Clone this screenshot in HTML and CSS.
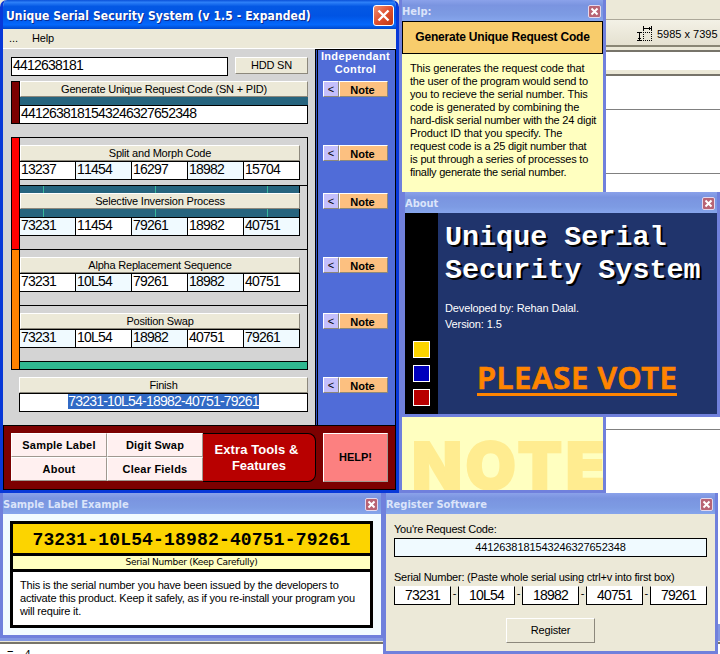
FILE: index.html
```html
<!DOCTYPE html>
<html lang="en">
<head>
<meta charset="utf-8">
<title>Unique Serial Security System</title>
<link rel="stylesheet" href="styles.css">
</head>
<body>
<div class="desktop">
  <div class="backdrop">
    <div class="bd-menu"></div>
    <div class="bd-status">
      <svg width="16" height="16" viewBox="0 0 16 16" fill="none" stroke="#000" shape-rendering="crispEdges">
        <path d="M0 6.500h5M0 14.500h5M2.500 7v7M1 12.500h3M6.500 0v5M14.500 0v5M7 2.500h7M12.500 1v3"/>
        <path d="M6 6.500h9M6 14.500h9M6.500 6v9M14.500 6v9" stroke-dasharray="1 1"/>
      </svg>
      <span class="t-size">5985 x 7395</span>
    </div>
    <div class="bd-tabs"></div>
    <div class="bd-ruler"></div>
    <div class="bd-row r1"></div>
    <div class="bd-row r2"></div>
    <div class="bd-row r3"></div>
    <div class="bd-rest"></div>
    <div class="bd-edge"></div>
    <div class="bd-foot"><span class="eq">=</span><span>4</span></div>
  </div>

  <section class="win help">
    <header class="bar"><span class="cap">Help:</span><i class="x"><svg viewBox="0 0 11 11"><path d="M2.500 2.500l6 6M8.500 2.500l-6 6"/></svg></i></header>
    <div class="help-body">
      <h2><span>Generate Unique Request Code</span></h2>
      <p><span class="k2">This generates the request code that</span><span class="k3">the user of the program would send to</span><span class="k2">you to recieve the serial number. This</span><span class="k2">code is generated by combining the</span><span class="k3">hard-disk serial number with the 24 digit</span><span class="k1">Product ID that you specify. The</span><span class="k3">request code is a 25 digit number that</span><span class="k3">is put through a series of processes to</span><span class="k4">finally generate the serial number.</span></p>
      <div class="watermark">NOTE</div>
    </div>
  </section>

  <section class="main">
    <header class="main-bar"><span>Unique Serial Security System (v 1.5 - Expanded)</span>
      <i class="big-x"><svg viewBox="0 0 19 19"><path d="M4.500 4.500l10 10M14.500 4.500l-10 10"/></svg></i></header>
    <nav class="menu"><span class="dots">...</span><span>Help</span></nav>
    <div class="work">
      <div class="steps">
        <div class="hdd"><div class="field big">4412638181</div><div class="btn"><span>HDD SN</span></div></div>
        <div class="gen">
          <div class="stripe maroon"></div>
          <div class="gen-main"><div class="btn"><span>Generate Unique Request Code (SN + PID)</span></div><div class="teal"></div><div class="field big">4412638181543246327652348</div></div>
        </div>
        <div class="group">
          <div class="stripes"><div class="stripe red"></div><div class="stripe orange"></div></div>
          <div class="sections">
            <div class="sec s1"><div class="btn"><span>Split and Morph Code</span></div>
              <div class="cells"><b>13237</b><b class="az">11454</b><b>16297</b><b class="az">18982</b><b>15704</b></div></div>
            <div class="sec s2"><div class="teal wires"><i></i><i></i><i></i></div><div class="btn"><span>Selective Inversion Process</span></div><div class="teal wires"><i></i><i></i><i></i></div>
              <div class="cells"><b class="az">73231</b><b>11454</b><b class="az">79261</b><b>18982</b><b class="az">40751</b></div></div>
            <div class="sec s3"><div class="btn"><span>Alpha Replacement Sequence</span></div>
              <div class="cells"><b>73231</b><b class="az">10L54</b><b>79261</b><b class="az">18982</b><b>40751</b></div></div>
            <div class="sec s4"><div class="btn"><span>Position Swap</span></div>
              <div class="cells"><b class="az">73231</b><b>10L54</b><b class="az">18982</b><b>40751</b><b class="az">79261</b></div></div>
            <div class="sec green"></div>
          </div>
        </div>
        <div class="finish"><div class="btn"><span>Finish</span></div><div class="field big"><mark>73231-10L54-18982-40751-79261</mark></div></div>
      </div>
      <aside class="control">
        <h3><span>Independant</span><span>Control</span></h3>
        <div class="note"><i>&lt;</i><b>Note</b></div>
        <div class="note g48"><i>&lt;</i><b>Note</b></div>
        <div class="note g32"><i>&lt;</i><b>Note</b></div>
        <div class="note g48"><i>&lt;</i><b>Note</b></div>
        <div class="note g40"><i>&lt;</i><b>Note</b></div>
        <div class="note g48"><i>&lt;</i><b>Note</b></div>
      </aside>
    </div>
    <footer class="tools">
      <div class="tool-grid"><div><span>Sample Label</span></div><div><span>Digit Swap</span></div><div><span>About</span></div><div><span>Clear Fields</span></div></div>
      <div class="extra"><span>Extra Tools &amp;</span><span class="fe">Features</span></div>
      <div class="help-btn"><span>HELP!</span></div>
    </footer>
  </section>

  <section class="win about">
    <header class="bar"><span class="cap">About</span><i class="x"><svg viewBox="0 0 11 11"><path d="M2.500 2.500l6 6M8.500 2.500l-6 6"/></svg></i></header>
    <div class="about-body">
      <div class="side"><i class="sq yellow"></i><i class="sq blue"></i><i class="sq crimson"></i></div>
      <div class="info"><h1>Unique Serial<br>Security System</h1>
        <p><span>Developed by: Rehan Dalal.</span><span>Version: 1.5</span></p>
        <div class="vote"><span>PLEASE VOTE</span></div></div>
    </div>
  </section>

  <section class="win sample">
    <header class="bar"><span class="cap">Sample Label Example</span><i class="x"><svg viewBox="0 0 11 11"><path d="M2.500 2.500l6 6M8.500 2.500l-6 6"/></svg></i></header>
    <div class="sample-body"><div class="label">
      <div class="serial"><span>73231-10L54-18982-40751-79261</span></div>
      <div class="keep"><span>Serial Number (Keep Carefully)</span></div>
      <p><span>This is the serial number you have been issued by the developers to</span><span>activate this product. Keep it safely, as if you re-install your program you</span><span>will require it.</span></p>
    </div></div>
  </section>

  <section class="win register">
    <header class="bar"><span class="cap">Register Software</span><i class="x"><svg viewBox="0 0 11 11"><path d="M2.500 2.500l6 6M8.500 2.500l-6 6"/></svg></i></header>
    <div class="register-body">
      <label>You're Request Code:</label>
      <div class="code"><span>4412638181543246327652348</span></div>
      <label>Serial Number: (Paste whole serial using ctrl+v into first box)</label>
      <div class="boxes"><b>73231</b><i>-</i><b>10L54</b><i>-</i><b>18982</b><i>-</i><b>40751</b><i>-</i><b>79261</b></div>
      <div class="btn reg-btn"><span>Register</span></div>
    </div>
  </section>
</div>
</body>
</html>
```
FILE: styles.css
```css
* { box-sizing: border-box; }
body { margin: 0; }
.desktop {
  position: relative; width: 720px; height: 654px; overflow: hidden; background: #fff;
  font: 11px/13px "Liberation Sans", Arial, sans-serif; color: #000; white-space: nowrap;
}
i, b { font-style: normal; font-weight: normal; }
h1, h2, h3, p { margin: 0; }
span { flex: none; }

/* editor behind the windows */
.backdrop { height: 654px; display: flex; flex-direction: column; }
.backdrop > div { flex: none; }
.bd-menu { height: 20px; background: #ece9d8; border-bottom: 1px solid #aca899; }
.bd-status { height: 27px; background: linear-gradient(#f3f1e6, #e5e1d0); border-bottom: 2px solid #8a8674; display: flex; align-items: center; gap: 4px; padding: 3px 0 0 637px; }
.bd-tabs { height: 5px; background: #ece9d8; border-bottom: 2px solid #77746a; }
.bd-ruler { height: 24px; border-bottom: 2px solid #77746a; background: linear-gradient(#fff 18px, #ece9d8 18px); }
.bd-row { border-bottom: 1px solid #808080; }
.r1 { height: 34px; }
.r2 { height: 64px; }
.r3 { height: 256px; }
.bd-rest { height: 194px; }
.bd-edge { height: 20px; background: linear-gradient(#8297e2 17px, #ece9d8 17px 18px, #77746a 18px); }
.bd-foot { height: 10px; padding: 4px 0 0 7px; display: flex; gap: 11px; overflow: hidden; }
.eq { margin-top: -1px; }

/* tool windows */
.win { position: absolute; border: 3px solid #7080dc; border-top: 0; display: flex; flex-direction: column; overflow: hidden; }
.win::after { content: ""; position: absolute; inset: 0 -3px -3px; border-right: 1px solid #4854c8; border-bottom: 1px solid #4854c8; }
.bar {
  flex: none; height: 21px; margin: 0 -3px; padding: 3px 5px 0 3px; display: flex; justify-content: space-between; align-items: flex-start;
  background: linear-gradient(#8ba2ea, #7a94e0 25%, #7d9be3 70%, #86a5ec); color: #dbe4fa;
}
.cap { font: bold 11px/18px "DejaVu Sans Condensed", "DejaVu Sans", sans-serif; font-stretch: condensed; }
.x { width: 13px; height: 13px; margin-top: 2px; border: 1px solid #e4d8ee; border-radius: 2px; background: #b86474; display: flex; }
.x svg { width: 11px; height: 11px; stroke: #fff; stroke-width: 2; }
.help { left: 399px; top: 0; width: 207px; height: 493px; }
.about { left: 402px; top: 192px; width: 318px; height: 225px; }
.sample { left: 0; top: 493px; width: 384px; height: 145px; }
.sample .bar { padding-right: 6px; }
.register { left: 383px; top: 493px; width: 335px; height: 161px; }

.help-body { flex: 1; background: #ffffc0; display: flex; flex-direction: column; }
.help-body h2 { height: 33px; border: 1px solid #000; background: #f8cc6c; font: bold 12px/31px "Liberation Sans", sans-serif; letter-spacing: -.2px; display: flex; justify-content: center; }
.help-body p { padding: 8px; display: flex; flex-direction: column; align-items: flex-start; }
.k1 { letter-spacing: -.1px; }
.k2 { letter-spacing: -.13px; }
.k3 { letter-spacing: -.2px; }
.k4 { letter-spacing: -.25px; }
.watermark { margin: auto 0 -15px 10px; font: 900 65px/78px Inter, sans-serif; letter-spacing: 3.600px; -webkit-text-stroke: 2px #ffec90; color: #ffec90; }

/* main window */
.main { position: absolute; left: 0; top: 0; width: 399px; height: 493px; border: 3px solid #0838d8; border-top: 0; border-radius: 7px 7px 0 0; overflow: hidden; display: flex; flex-direction: column; }
.main-bar {
  flex: none; height: 29px; margin: 0 -3px; padding: 2px 5px 0 6px; display: flex; align-items: center; justify-content: space-between;
  background: linear-gradient(#0a50d8, #2d80f8 8%, #0458e4 22%, #0054e4 55%, #0468fc 85%, #0048cc);
  color: #fff; font: bold 12px/16px "DejaVu Sans Condensed", "DejaVu Sans", sans-serif; font-stretch: condensed; letter-spacing: .1px; text-shadow: 1px 1px #0a2a90;
}
.big-x { width: 21px; height: 21px; border: 1px solid #fff; border-radius: 3px; background: linear-gradient(135deg, #f09070, #e05030 50%, #c03810); display: flex; }
.big-x svg { width: 19px; height: 19px; stroke: #fff; stroke-width: 2.400; }
.menu { flex: none; height: 20px; padding: 3px 0 0 6px; background: #ece9d8; border-bottom: 1px solid #fff; display: flex; gap: 14px; letter-spacing: -.1px; }
.work { flex: none; height: 376px; display: flex; background: #d4d4d4; }
.steps { width: 312px; padding: 8px 7px 0 8px; }
.btn { height: 16px; background: #ece9d8; border: 1px solid; border-color: #fff #8c887c #8c887c #fff; display: flex; justify-content: center; align-items: center; letter-spacing: -.2px; }
.field { height: 19px; border: 1px solid #000; background: #fff; }
.big { font-size: 14px; line-height: 15px; letter-spacing: -.78px; font-kerning: none; }
.hdd { display: flex; height: 24px; gap: 7px; }
.hdd .field { width: 217px; padding-left: 1px; }
.hdd .btn { width: 73px; height: 17px; }
.gen { display: flex; height: 43px; }
.stripe { border: 1px solid #000; }
.maroon { width: 9px; background: #7c0000; }
.gen-main { flex: 1; }
.gen-main .field { border-left: 0; padding-left: 1px; }
.teal { height: 8px; background: #26647e; }
.group { margin-top: 13px; height: 233px; display: flex; }
.stripes { width: 9px; display: flex; flex-direction: column; }
.red { height: 113px; background: #f00; }
.orange { flex: 1; border-top: 0; background: #ff8200; }
.sections { flex: 1; border-right: 1px solid #000; }
.sec { border-top: 1px solid #000; padding-right: 7px; }
.s1 { height: 48px; padding-top: 7px; }
.s2 { height: 64px; }
.s3, .s4 { height: 56px; padding-top: 7px; }
.green { height: 9px; border-bottom: 1px solid #000; background: #30b890; }
.wires { display: flex; padding-left: 23px; gap: 111px; border-right: 1px solid #000; }
.wires:first-child { height: 7px; }
.wires i { width: 1px; background: #38b89c; }
.cells { display: flex; height: 19px; border-top: 1px solid #000; border-bottom: 1px solid #000; }
.cells b { width: 56px; background: #fff; border-right: 1px solid #000; font-size: 14px; line-height: 15px; letter-spacing: -.78px; font-kerning: none; padding-left: 1px; }
.cells .az { background: #f0faff; }
.finish { margin: 7px 0 0 8px; }
.finish .field { display: flex; justify-content: center; }
mark { background: #316ac5; color: #fff; height: 15px; line-height: 15px; }
.control { flex: 1; border: 1px solid #000; border-bottom: 0; box-shadow: inset 1px 0 #3050c0, inset 2px 0 #000; background: #506cd8; padding: 0 7px; }
.control h3 { height: 31px; color: #fff; font: bold 11px/13px "Liberation Sans", sans-serif; letter-spacing: .35px; display: flex; flex-direction: column; align-items: center; margin: 0 -4px; }
.note { display: flex; height: 16px; }
.g48 { margin-top: 48px; }
.g32 { margin-top: 32px; }
.g40 { margin-top: 40px; }
.note i { width: 16px; background: #c4bffc; border: 1px solid; border-color: #fff #8c887c #8c887c #fff; text-align: center; line-height: 15px; }
.note b { flex: 1; background: #fcc080; border: 1px solid; border-color: #fff #8c887c #8c887c #fff; text-align: center; font-weight: bold; line-height: 16px; padding-right: 2px; }
.tools { flex: 1; border: 1px solid #000; background: #7c0000; display: flex; padding: 7px; font-weight: bold; }
.tool-grid { width: 192px; height: 48px; display: grid; grid-template-columns: 96px 96px; grid-template-rows: 24px 24px; letter-spacing: .2px; }
.tool-grid div { background: #fff0f0; border: 1px solid; border-color: #fff #a09890 #a09890 #fff; display: flex; align-items: center; justify-content: center; }
.extra { width: 113px; height: 49px; border: 1px solid #000; border-left: 0; border-radius: 0 8px 8px 0; background: #b80000; color: #fff; font-size: 13px; line-height: 16px; letter-spacing: .08px; padding-right: 5px; display: flex; flex-direction: column; align-items: center; justify-content: center; }
.fe { margin-left: 5px; letter-spacing: 0; }
.help-btn { margin-left: 7px; width: 65px; height: 49px; background: #fc8080; border: 1px solid; border-color: #fff #a09890 #a09890 #fff; display: flex; align-items: center; justify-content: center; }

/* about */
.about-body { flex: 1; display: flex; background: #20346c; }
.side { width: 33px; background: #000; display: flex; flex-direction: column; justify-content: flex-end; align-items: center; gap: 7px; padding-bottom: 8px; }
.sq { width: 17px; height: 17px; border: 1px solid #fff; }
.yellow { background: #fcd400; }
.blue { background: #0000bc; }
.crimson { background: #b80000; }
.info { padding: 8px 0 0 7px; color: #fff; flex: 1; }
.info h1 { font: bold 28.400px/33px "Liberation Mono", monospace; text-shadow: 2px 2px #000; height: 66px; }
.info p { margin-top: 13px; display: flex; flex-direction: column; align-items: flex-start; line-height: 16px; letter-spacing: -.12px; }
.vote { margin: 29px 0 0 32px; }
.vote span { display: block; width: 200px; height: 35px; border-bottom: 3px solid #ff8400; font: 600 31px/32px "Noto Sans", sans-serif; letter-spacing: .55px; -webkit-text-stroke: .7px #ff8400; color: #ff8400; }

/* sample label */
.sample-body { flex: 1; background: #f2fbff; padding: 7px 8px 0 7px; }
.label { height: 107px; border: 3px solid #000; background: #fff; }
.serial { height: 32px; background: #fcd400; border-bottom: 3px solid #000; text-align: center; font: bold 18px/32px "Liberation Mono", monospace; letter-spacing: .17px; }
.keep { height: 16px; background: #ffffc0; border-bottom: 3px solid #000; text-align: center; font: 9px/13px "DejaVu Sans", sans-serif; letter-spacing: -.25px; }
.label p { padding: 7px 0 0 7px; display: flex; flex-direction: column; align-items: flex-start; letter-spacing: -.2px; }

/* register */
.register-body { flex: 1; background: #ece9d8; padding: 9px 8px 0; display: flex; flex-direction: column; align-items: flex-start; }
.register-body label { letter-spacing: -.22px; }
.code { width: 313px; height: 19px; margin: 2px 0 14px; border: 1px solid #000; background: #f0faff; display: flex; justify-content: center; align-items: center; letter-spacing: -.1px; }
.boxes { display: flex; width: 313px; justify-content: space-between; margin-top: 2px; }
.boxes b { width: 57px; height: 19px; border: 1px solid #000; border-top-color: #fff; background: #fff; text-align: center; font-size: 14px; line-height: 16px; letter-spacing: -.78px; }
.boxes i { line-height: 15px; }
.reg-btn { width: 89px; height: 25px; margin: 13px 0 0 112px; }
```
